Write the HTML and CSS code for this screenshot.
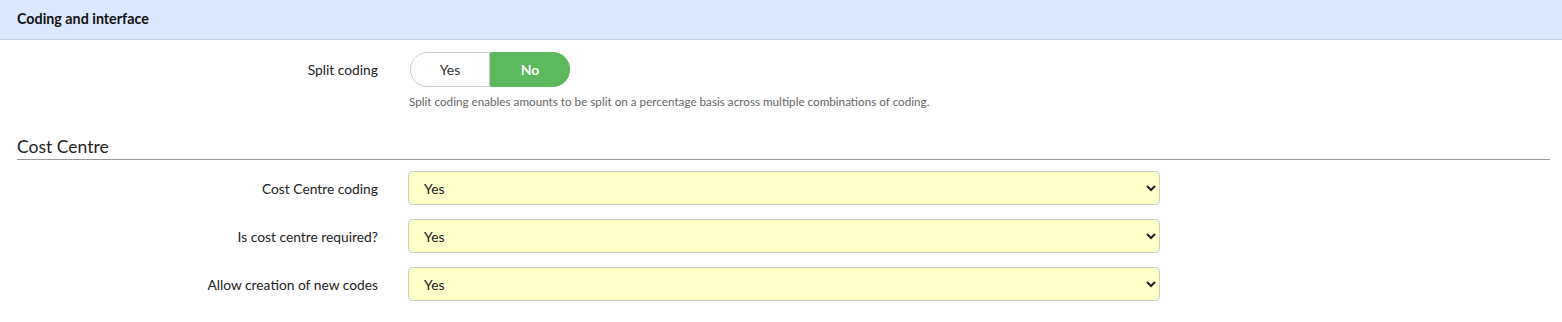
FILE: index.html
```html
<!DOCTYPE html>
<html lang="en">
<head>
  <meta charset="UTF-8">
  <meta name="viewport" content="width=device-width, initial-scale=1.0">
  <title>Coding and interface</title>
  <link rel="stylesheet" href="styles.css">
</head>
<body>
  <div class="panel-heading">Coding and interface</div>

  <div class="panel-body">
    <div class="form-row toggle-row">
      <label class="form-label">Split coding</label>
      <div class="form-field">
        <div class="toggle">
          <button class="toggle-btn">Yes</button>
          <button class="toggle-btn active">No</button>
        </div>
        <p class="help-text">Split coding enables amounts to be split on a percentage basis across multiple combinations of coding.</p>
      </div>
    </div>

    <h3 class="section-title">Cost Centre</h3>

    <div class="form-row">
      <label class="form-label">Cost Centre coding</label>
      <div class="form-field">
        <select class="form-select">
          <option>Yes</option>
          <option>No</option>
        </select>
      </div>
    </div>
    <div class="form-row">
      <label class="form-label">Is cost centre required?</label>
      <div class="form-field">
        <select class="form-select">
          <option>Yes</option>
          <option>No</option>
        </select>
      </div>
    </div>
    <div class="form-row">
      <label class="form-label">Allow creation of new codes</label>
      <div class="form-field">
        <select class="form-select">
          <option>Yes</option>
          <option>No</option>
        </select>
      </div>
    </div>
  </div>
</body>
</html>
```

FILE: styles.css
```css
body {
  margin: 0;
  font-family: Lato, "Open Sans", sans-serif;
  font-size: 13.8px;
  color: #222;
  background: #fff;
}
.panel-heading {
  height: 40px;
  line-height: 38px;
  padding: 0 17px;
  box-sizing: border-box;
  background: #dce8fd;
  border-bottom: 1px solid #c3cfe2;
  font-size: 14.3px;
  font-weight: bold;
  color: #111;
}
.panel-body {
  padding: 12px 12px 0 17px;
}
.form-row {
  display: grid;
  grid-template-columns: 361px 752px;
  column-gap: 30px;
  align-items: center;
  margin-bottom: 14px;
}
.toggle-row {
  align-items: start;
}
.toggle-row .form-label {
  padding-top: 9px;
}
.form-label {
  text-align: right;
  color: #222;
}
.toggle {
  display: flex;
  width: 160px;
  height: 35px;
  margin-left: 2px;
}
.toggle-btn {
  flex: 1;
  font-family: inherit;
  font-size: 14px;
  border: 1px solid #ccc;
  background: #fff;
  color: #333;
  border-radius: 17px 0 0 17px;
  cursor: pointer;
}
.toggle-btn.active {
  background: #5cb85c;
  border-color: #5cb85c;
  color: #fff;
  font-weight: bold;
  border-radius: 0 17px 17px 0;
}
.help-text {
  margin: 7px 0 0 1px;
  font-size: 11.7px;
  color: #666;
}
.section-title {
  margin: 28px 0 11px 0;
  padding-bottom: 2px;
  font-size: 17.5px;
  font-weight: normal;
  color: #222;
  border-bottom: 1px solid #999;
  width: 1533px;
}
.form-select {
  width: 752px;
  height: 34px;
  padding: 0 11px;
  font-family: inherit;
  font-size: 14px;
  color: #222;
  background: #ffffcc;
  border: 1px solid #ccc;
  border-radius: 4px;
}
```
